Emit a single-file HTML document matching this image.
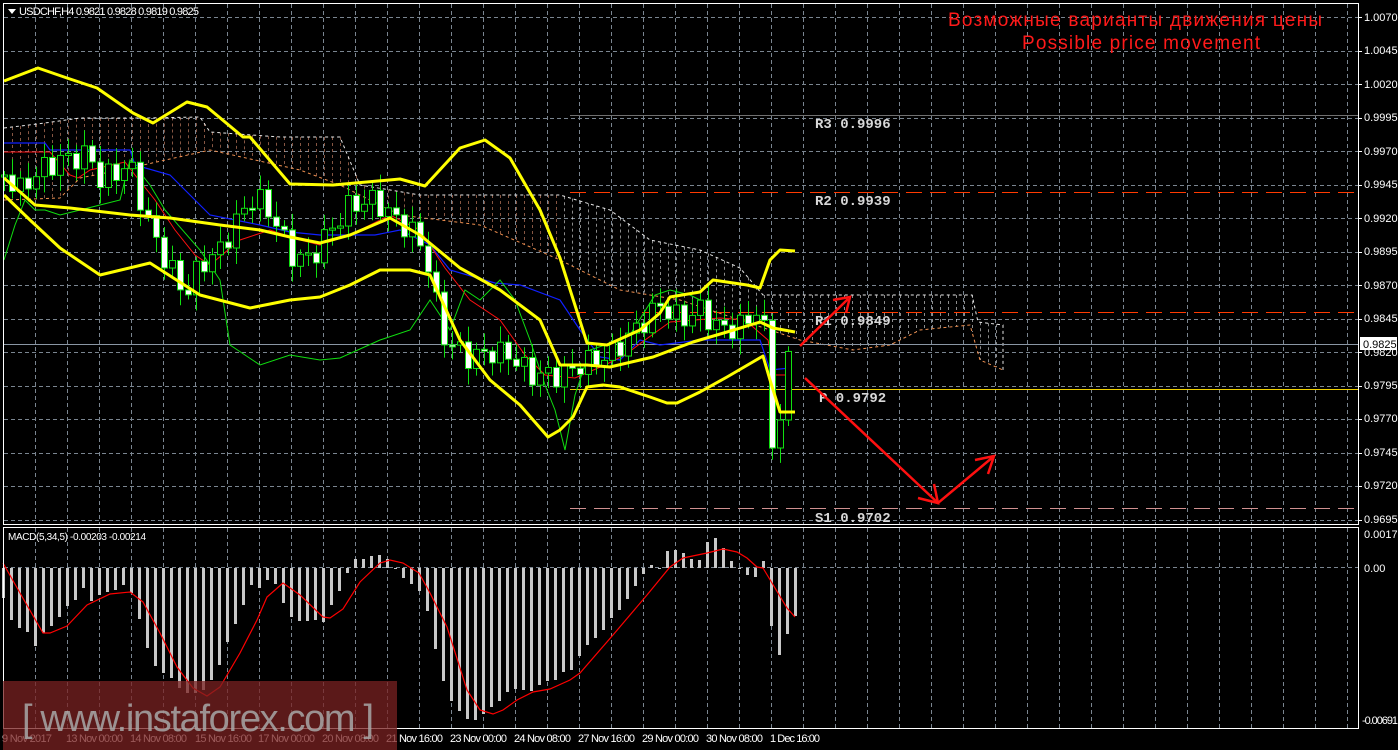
<!DOCTYPE html>
<html><head><meta charset="utf-8">
<style>
html,body{margin:0;padding:0;background:#000;width:1398px;height:750px;overflow:hidden}
svg{display:block}
text{font-family:"Liberation Sans",sans-serif}
text.mono{font-family:"Liberation Mono",monospace;font-weight:bold}
</style></head>
<body>
<svg id="s" width="1398" height="750" xmlns="http://www.w3.org/2000/svg">
<rect width="1398" height="750" fill="#000"/>
<g id="grid" stroke="#7a8590" stroke-width="1" stroke-dasharray="4,3"></g>
<g id="cloud"></g>
<g fill="none" stroke-width="1">
<line x1="570" y1="115.5" x2="1358" y2="115.5" stroke="#bbb" stroke-opacity="0.6"/>
<line x1="570" y1="192.5" x2="1358" y2="192.5" stroke="#ff3a00" stroke-dasharray="16,8"/>
<line x1="570" y1="312.5" x2="1358" y2="312.5" stroke="#ff3a00" stroke-dasharray="16,8"/>
<line x1="570" y1="389.5" x2="1358" y2="389.5" stroke="#f0d000"/>
<line x1="570" y1="508.5" x2="1358" y2="508.5" stroke="#d09090" stroke-dasharray="16,8"/>
<line x1="4" y1="344.5" x2="1358" y2="344.5" stroke="#8a96a4"/>
</g>
<g font-size="14" fill="#d8d8d8">
<text class="mono" x="815" y="128">R3 0.9996</text>
<text class="mono" x="815" y="205">R2 0.9939</text>
<text class="mono" x="815" y="325">R1 0.9849</text>
<text class="mono" x="819" y="402">P 0.9792</text>
<text class="mono" x="815" y="522">S1 0.9702</text>
</g>
<g id="lines" fill="none"></g>
<g id="candles"></g>
<g id="bb" fill="none" stroke="#ffff00" stroke-width="3" stroke-linejoin="round"></g>
<g stroke="#ff1010" stroke-width="2.5" fill="none">
<line x1="800" y1="346" x2="848" y2="299"/>
<polyline points="833,300 850,297 846,313"/>
<polyline points="805,378 938,503 993,457"/>
<polyline points="918,498 938,503 934,484"/>
<polyline points="975,460 994,456 988,474"/>
</g>
<g id="macd"></g>
<polyline id="sig" fill="none" stroke="#ff0000" stroke-width="1.2"/>
<g fill="none" stroke="#fff" stroke-width="1">
<rect x="3.5" y="3.5" width="1355" height="521"/>
<rect x="3.5" y="527.5" width="1355" height="201"/>
</g>
<g id="ticks" stroke="#fff"></g>
<g font-size="11" fill="#fff" id="axis">
<text x="1364" y="21">1.0070</text><text x="1364" y="54">1.0045</text><text x="1364" y="88">1.0020</text>
<text x="1364" y="121">0.9995</text><text x="1364" y="155">0.9970</text><text x="1364" y="188">0.9945</text>
<text x="1364" y="222">0.9920</text><text x="1364" y="255">0.9895</text><text x="1364" y="289">0.9870</text>
<text x="1364" y="322">0.9845</text><text x="1364" y="356">0.9820</text><text x="1364" y="389">0.9795</text>
<text x="1364" y="422">0.9770</text><text x="1364" y="456">0.9745</text><text x="1364" y="489">0.9720</text>
<text x="1364" y="523">0.9695</text>
<text x="1364" y="538">0.0017</text><text x="1364" y="572">0.00</text><text x="1362" y="724" textLength="36">-0.00691</text>
</g>
<rect x="1360" y="337" width="37" height="13" fill="#fff"/>
<text x="1363" y="348" font-size="11" fill="#000">0.9825</text>
<g font-size="11" fill="#fff">
<text x="2" y="742" textLength="50">9 Nov 2017</text><text x="66" y="742" textLength="57">13 Nov 00:00</text><text x="130" y="742" textLength="57">14 Nov 08:00</text>
<text x="195" y="742" textLength="57">15 Nov 16:00</text><text x="258" y="742" textLength="57">17 Nov 00:00</text><text x="322" y="742" textLength="57">20 Nov 08:00</text>
<text x="386" y="742" textLength="57">21 Nov 16:00</text><text x="450" y="742" textLength="57">23 Nov 00:00</text><text x="514" y="742" textLength="57">24 Nov 08:00</text>
<text x="578" y="742" textLength="57">27 Nov 16:00</text><text x="642" y="742" textLength="57">29 Nov 00:00</text><text x="706" y="742" textLength="57">30 Nov 08:00</text>
<text x="770" y="742" textLength="50">1 Dec 16:00</text>
</g>
<polygon points="8,9 16,9 12,14" fill="#fff"/>
<text x="19" y="15" font-size="11" fill="#fff" textLength="180">USDCHF,H4  0.9821 0.9828 0.9819 0.9825</text>
<text x="8" y="540" font-size="10" fill="#fff" textLength="138">MACD(5,34,5) -0.00203 -0.00214</text>
<text x="948" y="26" font-size="19" fill="#ff1a1a" textLength="374">Возможные варианты движения цены</text>
<text x="1022" y="49" font-size="19" fill="#ff1a1a" textLength="238">Possible price movement</text>
<rect x="3" y="681" width="394" height="69" fill="#7a2222" fill-opacity="0.75"/>
<text x="22" y="731" font-size="38" fill="#a8a8a8" fill-opacity="0.85" textLength="352">[ www.instaforex.com ]</text>
</svg>
<script>
var NS="http://www.w3.org/2000/svg";
function el(p,t,a){var e=document.createElementNS(NS,t);for(var k in a)e.setAttribute(k,a[k]);p.appendChild(e);return e;}
var g=document.getElementById('grid');
for(var x=35;x<1358;x+=32){el(g,'line',{x1:x+.5,y1:4,x2:x+.5,y2:524});el(g,'line',{x1:x+.5,y1:528,x2:x+.5,y2:728});}
for(var i=0;i<16;i++){var y=Math.round(17+i*33.5)+.5;el(g,'line',{x1:4,y1:y,x2:1358,y2:y});}
el(g,'line',{x1:4,y1:567.5,x2:1358,y2:567.5});
var tk=document.getElementById('ticks');
for(var i=0;i<16;i++){var y=Math.round(17+i*33.5)+.5;el(tk,'line',{x1:1358,y1:y,x2:1362,y2:y});}
function interp(pts,x){for(var i=0;i<pts.length-1;i++){if(x>=pts[i][0]&&x<=pts[i+1][0]){var t=(x-pts[i][0])/(pts[i+1][0]-pts[i][0]);return pts[i][1]+t*(pts[i+1][1]-pts[i][1]);}}return pts[x<pts[0][0]?0:pts.length-1][1];}
function P(a){return a.map(function(p){return p.join(',')}).join(' ');}
var cl=document.getElementById('cloud');
var ctop=[[4,128],[45,123],[80,118],[145,118],[200,117],[210,132],[280,137],[340,137],[360,185],[420,195],[560,195],[610,210],[650,240],[700,250],[740,268],[763,295],[972,295],[978,322],[1003,325],[1003,370]];
var cbot=[[4,200],[60,198],[80,178],[130,168],[210,150],[300,170],[340,185],[400,215],[480,225],[560,260],[620,290],[680,300],[740,320],[800,340],[853,350],[890,345],[920,330],[970,325],[980,360],[1003,370]];
for(var x=12;x<1003;x+=8){var a=interp(ctop,x),b=interp(cbot,x);if(b-a>3){el(cl,'line',{x1:x+.5,y1:a,x2:x+.5,y2:b,stroke:(x<560?'#e09070':'#e8e8e8'),'stroke-width':1,'stroke-dasharray':'3,3','stroke-opacity':0.6});}}
el(cl,'polyline',{points:P(ctop),fill:'none',stroke:'#e8e8e8','stroke-dasharray':'3,3','stroke-width':1});
el(cl,'polyline',{points:P(cbot),fill:'none',stroke:'#f09050','stroke-dasharray':'3,3','stroke-width':1});
var L=document.getElementById('lines');
el(L,'polyline',{points:P([[4,143],[45,143],[50,150],[130,150],[135,165],[170,175],[210,215],[260,225],[290,232],[320,235],[375,235],[400,230],[430,245],[450,270],[495,283],[520,285],[560,300],[580,330],[600,357],[620,360],[640,340],[660,345],[700,340],[760,340],[770,370],[790,368]]),stroke:'#1020ff','stroke-width':1.2});
el(L,'polyline',{points:P([[4,152],[50,152],[70,175],[78,178],[90,170],[125,162],[135,175],[155,200],[175,230],[195,255],[210,265],[240,240],[270,230],[300,240],[320,245],[350,235],[390,215],[420,230],[445,268],[470,300],[500,320],[525,355],[545,375],[575,378],[605,365],[625,355],[645,340],[670,322],[695,320],[720,318],[745,320],[768,340],[775,375],[790,375]]),stroke:'#ff1010','stroke-width':1});
el(L,'polyline',{points:P([[4,260],[15,225],[25,200],[35,210],[45,210],[60,215],[80,210],[100,205],[120,200],[130,160],[150,185],[165,210],[200,250],[220,280],[230,345],[260,365],[290,355],[320,360],[340,358],[380,340],[410,330],[430,300],[450,330],[465,290],[480,300],[500,280],[515,300],[530,340],[545,385],[555,410],[565,450],[575,395],[590,350],[605,345],[630,335],[655,295],[670,290],[690,295],[700,300]]),stroke:'#10e010','stroke-width':1});
var C=document.getElementById('candles');
var cp=[[4,175],[20,190],[40,170],[60,160],[90,155],[100,180],[130,165],[145,215],[160,250],[185,295],[200,265],[220,250],[240,215],[255,195],[275,220],[290,255],[310,260],[330,230],[350,205],[375,200],[390,215],[410,230],[425,250],[435,300],[445,340],[470,358],[490,352],[510,355],[530,375],[560,375],[580,365],[610,355],[640,325],[660,305],[680,320],[700,310],[720,330],[745,325],[762,300],[771,445],[780,420],[790,345],[795,345]];
var prev=interp(cp,4);
for(var i=0;i<100;i++){var x=4+i*8;if(x>795)break;var c=interp(cp,x)+Math.sin(i*2.3)*12;if(i==96)c=448;if(i==97)c=420;var o=prev;var hi=Math.min(o,c)-4-Math.abs(Math.sin(i*1.7))*12,lo=Math.max(o,c)+4+Math.abs(Math.cos(i*1.3))*12;
el(C,'line',{x1:x+.5,y1:hi,x2:x+.5,y2:lo,stroke:'#10e010','stroke-width':1});
var t=Math.min(o,c),h=Math.max(Math.abs(c-o),2);
el(C,'rect',{x:x-2.5,y:t,width:6,height:h,fill:(c>o?'#fff':'#000'),stroke:'#10e010','stroke-width':1});
prev=c;}
var B=document.getElementById('bb');
el(B,'polyline',{points:P([[4,81],[38,68],[67,78],[97,88],[133,113],[153,123],[187,102],[207,107],[243,137],[250,137],[290,184],[333,185],[400,179],[425,186],[460,148],[485,140],[510,158],[540,210],[560,258],[587,343],[607,345],[640,330],[660,313],[670,297],[700,292],[713,280],[747,285],[760,288],[770,260],[780,250],[795,251]])});
el(B,'polyline',{points:P([[4,178],[35,205],[70,208],[130,215],[170,218],[220,225],[260,230],[290,237],[320,243],[350,235],[390,218],[420,235],[460,268],[500,290],[540,320],[560,365],[587,365],[610,367],[653,357],[693,342],[727,332],[760,322],[773,328],[795,332]])});
el(B,'polyline',{points:P([[4,195],[30,220],[60,248],[100,275],[150,263],[200,295],[250,308],[290,300],[320,297],[350,285],[380,270],[410,270],[430,275],[460,340],[490,380],[520,405],[548,437],[560,430],[573,417],[587,387],[603,385],[620,387],[650,397],[667,403],[677,403],[700,392],[727,377],[763,356],[770,380],[780,412],[795,412]])});
var M=document.getElementById('macd');
var v=[30,52,60,64,78,65,58,49,38,32,20,33,27,24,22,17,25,51,80,98,105,110,120,125,125,122,112,97,74,56,37,17,20,12,16,35,49,53,53,52,54,37,23,5,-9,-9,-12,-13,-9,1,10,16,23,43,81,113,133,143,151,152,146,139,133,124,121,122,123,117,113,112,104,102,88,77,70,62,50,42,31,18,6,-3,0,-17,-18,-15,-9,-8,-26,-30,-20,-7,1,7,9,-7,58,87,66,48];
for(var i=0;i<v.length;i++){var x=2+i*8,d=v[i];el(M,'rect',{x:x,y:d>=0?568:568+d,width:3,height:Math.max(Math.abs(d),1),fill:'#c8c8c8'});}
document.getElementById('sig').setAttribute('points',P([[3,563],[20,593],[43,633],[50,633],[67,626],[87,605],[110,594],[130,592],[143,602],[160,633],[177,667],[193,688],[207,696],[220,687],[240,653],[257,620],[267,597],[283,583],[300,595],[323,617],[330,618],[343,609],[360,582],[380,563],[390,560],[403,563],[419,573],[430,593],[447,627],[467,690],[480,710],[493,714],[503,710],[517,700],[533,692],[550,689],[570,680],[580,673],[613,635],[647,595],[670,567],[683,558],[707,553],[723,549],[737,552],[747,558],[757,567],[763,568],[787,608],[795,617]]));
</script>
</body></html>
